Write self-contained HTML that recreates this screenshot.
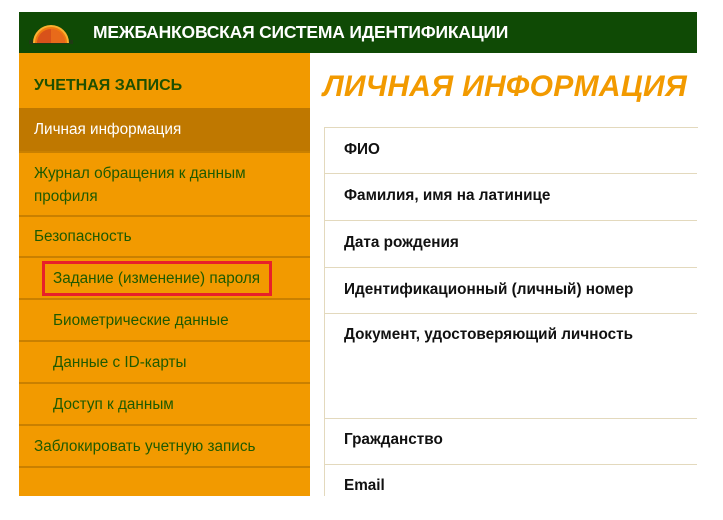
<!DOCTYPE html>
<html><head><meta charset="utf-8">
<style>
body{margin:0;width:723px;height:520px;background:#fff;position:relative;overflow:hidden;font-family:"Liberation Sans",sans-serif;}
.hdr{position:absolute;left:19px;top:12px;width:678px;height:41px;background:#0f4a05;}
.hdr .t{position:absolute;left:74px;top:10px;color:#fff;font-weight:bold;font-size:17.5px;letter-spacing:-0.2px;}
.side{position:absolute;left:19px;top:53px;width:291px;height:443px;background:#f29a00;}
.side div{position:absolute;left:0;width:291px;color:#1e5a00;font-size:15.3px;}
.ln{height:2px;background:#c98000;}
h1{position:absolute;left:323px;top:70px;margin:0;font-size:30px;font-weight:bold;font-style:italic;color:#f29a00;letter-spacing:0.3px;}
.tbl{position:absolute;left:324px;top:127px;width:373px;height:369px;border-left:1px solid #e3d9bd;border-top:1px solid #e3d9bd;}
.r{position:absolute;left:324px;width:373px;height:1px;background:#e3d9bd;}
.l{position:absolute;left:344px;font-size:15.3px;font-weight:bold;color:#111;}
</style></head><body>
<div class="hdr">
<svg style="position:absolute;left:8px;top:4px" width="48" height="30" viewBox="0 0 48 30">
<rect x="2" y="24" width="44" height="4" fill="#1f3a14"/>
<path d="M7 27 A17 17 0 0 1 41 27 Z" fill="#f07a10"/>
<path d="M10 27 A14 14 0 0 1 38 27 Z" fill="#d8521a"/>
<path d="M24 13 A14 14 0 0 1 38 27 L24 27 Z" fill="#e86a1a"/>
<path d="M7 27 A17 17 0 0 1 41 27" fill="none" stroke="#fbb030" stroke-width="2"/>
</svg>
<div class="t">МЕЖБАНКОВСКАЯ СИСТЕМА ИДЕНТИФИКАЦИИ</div>
</div>
<div class="side">
<div style="top:24px;left:15px;font-weight:bold;font-size:16px;color:#1e5000">УЧЕТНАЯ ЗАПИСЬ</div>
<div style="top:55px;height:44px;background:#bf7800;"></div>
<div style="top:68px;left:15px;color:#fff">Личная информация</div>
<div class="ln" style="top:98px"></div>
<div style="top:109px;left:15px;line-height:23px">Журнал обращения к данным<br>профиля</div>
<div class="ln" style="top:162px"></div>
<div style="top:175px;left:15px">Безопасность</div>
<div class="ln" style="top:203px"></div>
<div style="top:208px;left:23px;width:224px;height:29px;border:3px solid #e8202a;"></div>
<div style="top:217px;left:34px">Задание (изменение) пароля</div>
<div class="ln" style="top:245px"></div>
<div style="top:259px;left:34px">Биометрические данные</div>
<div class="ln" style="top:287px"></div>
<div style="top:301px;left:34px">Данные с ID-карты</div>
<div class="ln" style="top:329px"></div>
<div style="top:343px;left:34px">Доступ к данным</div>
<div class="ln" style="top:371px"></div>
<div style="top:385px;left:15px">Заблокировать учетную запись</div>
<div class="ln" style="top:413px"></div>
</div>
<h1>ЛИЧНАЯ ИНФОРМАЦИЯ</h1>
<div class="tbl"></div>
<div class="r" style="top:173px"></div>
<div class="r" style="top:220px"></div>
<div class="r" style="top:267px"></div>
<div class="r" style="top:313px"></div>
<div class="r" style="top:418px"></div>
<div class="r" style="top:464px"></div>
<div class="l" style="top:141px">ФИО</div>
<div class="l" style="top:187px">Фамилия, имя на латинице</div>
<div class="l" style="top:234px">Дата рождения</div>
<div class="l" style="top:281px">Идентификационный (личный) номер</div>
<div class="l" style="top:326px">Документ, удостоверяющий личность</div>
<div class="l" style="top:431px">Гражданство</div>
<div class="l" style="top:477px">Email</div>
<div style="position:absolute;left:0;top:496px;width:723px;height:24px;background:#fff"></div>
</body></html>
